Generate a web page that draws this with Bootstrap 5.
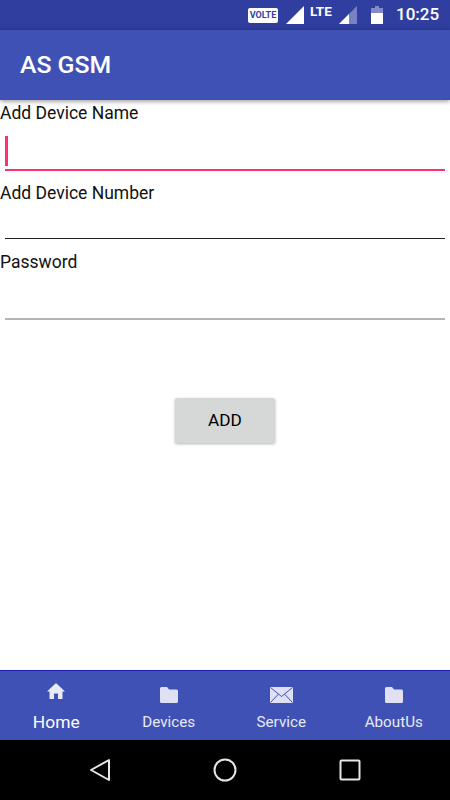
<!DOCTYPE html>
<html lang="en">
<head>
  <meta charset="UTF-8">
  <title>AS GSM</title>
  <link href="https://cdn.jsdelivr.net/npm/bootstrap@5.3.3/dist/css/bootstrap.min.css" rel="stylesheet">
  <style>
    body {
      margin: 0;
      width: 450px;
      height: 800px;
      overflow: hidden;
      font-family: Roboto, "Liberation Sans", sans-serif;
      color: #111;
    }

    .screen { height: 800px; }

    .status-strip {
      height: 30px;
      background: #303f9f;
      color: #fff;
      padding-right: 10px;
    }

    .volte-tag {
      width: 30px;
      height: 15px;
      margin-right: 8px;
      background: #fff;
      border-radius: 2px;
      color: #303f9f;
      font-size: 9px;
      font-weight: 700;
      line-height: 15px;
      text-align: center;
    }

    .lte-tag {
      width: 23px;
      margin: -9px 6px 0 6px;
      font-size: 13.5px;
      font-weight: 700;
      line-height: 12px;
      white-space: nowrap;
    }

    .signal-gap { margin-right: 14px; }

    .clock {
      width: 44px;
      margin-left: 13px;
      font-size: 17px;
      font-weight: 500;
      white-space: nowrap;
    }

    .app-bar {
      height: 70px;
      padding-left: 20px;
      background: #3f51b5;
      color: #fff;
      font-size: 24.8px;
      font-weight: 500;
      box-shadow: 0 1px 5px rgba(0, 0, 0, .45);
      position: relative;
    }

    .form-area { padding-top: 1px; }

    .field-label {
      display: block;
      margin: 0;
      font-size: 17.5px;
      line-height: 24px;
      color: #111;
    }

    .line-input {
      display: block;
      width: 440px;
      margin-left: 5px;
      padding: 0;
      border: 0;
      border-radius: 0;
      background: transparent;
      box-shadow: none;
    }

    .line-active { height: 46px; margin-bottom: 10px; border-bottom: 2px solid #ff2d7a; }
    .line-dark { height: 34px; margin-bottom: 11px; border-bottom: 1px solid #222; }
    .line-gray { height: 46px; border-bottom: 2px solid #b4b4b4; }

    .caret-bar {
      width: 3px;
      height: 30px;
      margin-top: 11px;
      background: #ff2d7a;
    }

    .add-btn {
      width: 100px;
      height: 45px;
      margin-top: 78px;
      padding: 0;
      border: 0;
      border-radius: 2px;
      background: #d6d7d7;
      color: #000;
      font-size: 17.2px;
      font-weight: 400;
      box-shadow: 0 1px 3px rgba(0, 0, 0, .3);
    }

    .tab-strip {
      height: 70px;
      background: #3f51b5;
      border-top: 1px solid #1a1ab0;
    }

    .tab-item {
      width: 25%;
      color: #e8eaf6;
      font-size: 15.2px;
      line-height: 18px;
    }

    .tab-icon { height: 42px; padding-top: 12px; }
    .tab-icon svg { display: block; }
    .tab-item-on { color: #fff; font-size: 17.4px; }

    .nav-strip { height: 60px; background: #000; padding: 0 89px; }
  </style>
</head>
<body>
  <div class="screen d-flex flex-column">
    <div class="status-strip d-flex align-items-center justify-content-end">
      <div class="volte-tag">VOLTE</div>
      <svg width="18" height="18" viewBox="0 0 18 18"><path d="M18 0V18H0Z" fill="#fff"/></svg>
      <div class="lte-tag">LTE</div>
      <svg class="signal-gap" width="18" height="18" viewBox="0 0 18 18"><path d="M18 0V18H0Z" fill="#fff" fill-opacity=".35"/><path d="M10 8V18H0Z" fill="#fff"/></svg>
      <svg width="12" height="18" viewBox="0 0 12 18"><path d="M4 0H8V2H12V7H0V2H4Z" fill="#fff" fill-opacity=".4"/><path d="M0 7H12V18H0Z" fill="#fff"/></svg>
      <div class="clock">10:25</div>
    </div>

    <div class="app-bar d-flex align-items-center">AS GSM</div>

    <div class="form-area flex-grow-1 d-flex flex-column">
      <label class="field-label" for="deviceName">Add Device Name</label>
      <div class="line-input line-active" id="deviceName"><div class="caret-bar"></div></div>
      <label class="field-label" for="deviceNumber">Add Device Number</label>
      <div class="line-input line-dark" id="deviceNumber"></div>
      <label class="field-label" for="devicePass">Password</label>
      <div class="line-input line-gray" id="devicePass"></div>
      <button type="button" class="btn add-btn align-self-center">ADD</button>
    </div>

    <div class="tab-strip d-flex">
      <div class="tab-item tab-item-on text-center">
        <div class="tab-icon d-flex justify-content-center">
          <svg width="18" height="16" viewBox="0 0 18 16"><path d="M9 0L18 8.500H15.500V16H11V10.500H7V16H2.500V8.500H0Z" fill="#e8eaf6"/></svg>
        </div>
        <div>Home</div>
      </div>
      <div class="tab-item text-center">
        <div class="tab-icon d-flex justify-content-center">
          <svg class="mt-1" width="18" height="16" viewBox="0 0 18 16"><path d="M1.500 0H7L9 2.500H16.500Q18 2.500 18 4V14.500Q18 16 16.500 16H1.500Q0 16 0 14.500V1.500Q0 0 1.500 0Z" fill="#dfe1f3"/></svg>
        </div>
        <div>Devices</div>
      </div>
      <div class="tab-item text-center">
        <div class="tab-icon d-flex justify-content-center">
          <svg class="mt-1" width="23" height="16" viewBox="0 0 23 16"><rect width="23" height="16" fill="#dfe1f3"/><path d="M.5.500L11.500 9.500L22.500.5M.5 15.500L8.500 7M22.500 15.500L14.500 7" fill="none" stroke="#3f51b5" stroke-width="1"/></svg>
        </div>
        <div>Service</div>
      </div>
      <div class="tab-item text-center">
        <div class="tab-icon d-flex justify-content-center">
          <svg class="mt-1" width="18" height="16" viewBox="0 0 18 16"><path d="M1.500 0H7L9 2.500H16.500Q18 2.500 18 4V14.500Q18 16 16.500 16H1.500Q0 16 0 14.500V1.500Q0 0 1.500 0Z" fill="#dfe1f3"/></svg>
        </div>
        <div>AboutUs</div>
      </div>
    </div>

    <div class="nav-strip d-flex align-items-center justify-content-between">
      <svg width="22" height="24" viewBox="0 0 22 24"><path d="M20 2V22L2 12Z" fill="none" stroke="#e6e6e6" stroke-width="2" stroke-linejoin="round"/></svg>
      <svg width="24" height="24" viewBox="0 0 24 24"><circle cx="12" cy="12" r="10.500" fill="none" stroke="#e6e6e6" stroke-width="2"/></svg>
      <svg width="22" height="22" viewBox="0 0 22 22"><rect x="1.500" y="1.500" width="19" height="19" rx="1" fill="none" stroke="#e6e6e6" stroke-width="2"/></svg>
    </div>
  </div>

  <script src="https://cdn.jsdelivr.net/npm/bootstrap@5.3.3/dist/js/bootstrap.bundle.min.js"></script>
</body>
</html>
